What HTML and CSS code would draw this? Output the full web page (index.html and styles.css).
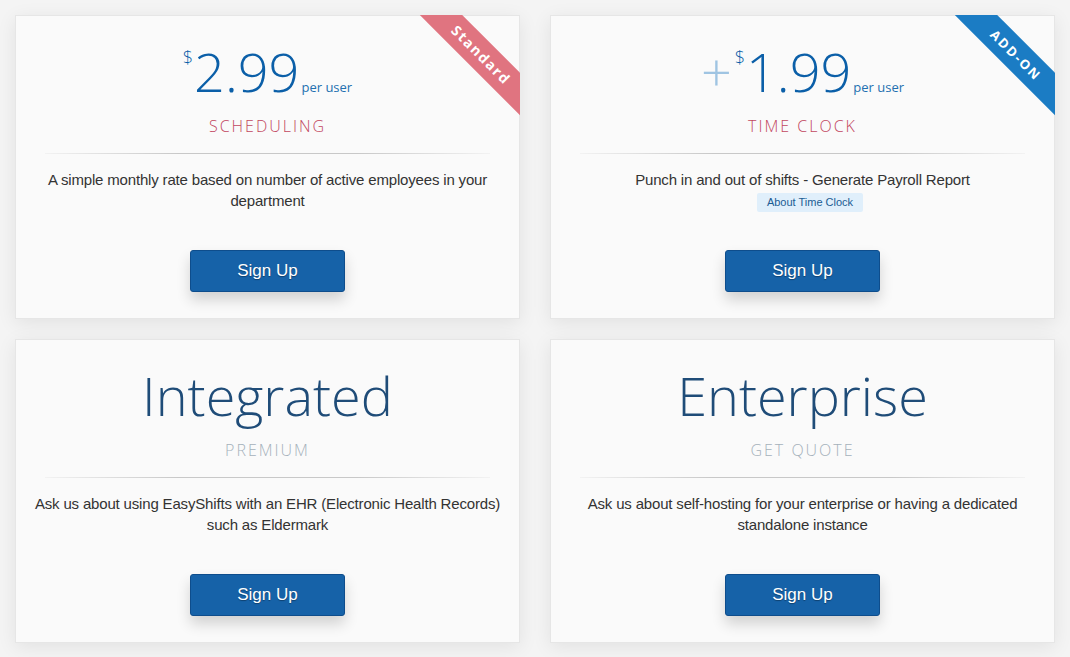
FILE: index.html
```html
<!DOCTYPE html>
<html lang="en">
<head>
<meta charset="utf-8">
<title>Pricing</title>
<link rel="stylesheet" href="styles.css">
</head>
<body>
<main class="pricing">
  <section class="card">
    <div class="ribbon-wrap"><div class="ribbon ribbon-standard">Standard</div></div>
    <div class="price"><span class="cur">$</span>2.99<span class="unit">per user</span></div>
    <div class="plan plan-red">SCHEDULING</div>
    <hr class="divider">
    <div class="desc">A simple monthly rate based on number of active employees in your department</div>
    <a class="btn" href="#">Sign Up</a>
  </section>
  <section class="card">
    <div class="ribbon-wrap"><div class="ribbon ribbon-addon">ADD-ON</div></div>
    <div class="price"><span class="plus">+</span><span class="cur">$</span>1.99<span class="unit">per user</span></div>
    <div class="plan plan-red">TIME CLOCK</div>
    <hr class="divider">
    <div class="desc">Punch in and out of shifts - Generate Payroll Report
      <div class="badge-row"><span class="badge">About Time Clock</span></div>
    </div>
    <a class="btn" href="#">Sign Up</a>
  </section>
  <section class="card">
    <div class="price name">Integrated</div>
    <div class="plan plan-gray">PREMIUM</div>
    <hr class="divider">
    <div class="desc">Ask us about using EasyShifts with an EHR (Electronic Health Records) such as Eldermark</div>
    <a class="btn" href="#">Sign Up</a>
  </section>
  <section class="card">
    <div class="price name">Enterprise</div>
    <div class="plan plan-gray">GET QUOTE</div>
    <hr class="divider">
    <div class="desc">Ask us about self-hosting for your enterprise or having a dedicated standalone instance</div>
    <a class="btn" href="#">Sign Up</a>
  </section>
</main>
</body>
</html>
```
FILE: styles.css
```css
* { box-sizing: border-box; }
html, body { margin: 0; padding: 0; }
body {
  background: #f4f4f4;
  font-family: "Liberation Sans", Arial, sans-serif;
  color: #333;
  width: 1070px;
  height: 657px;
  overflow: hidden;
}
.pricing {
  display: grid;
  grid-template-columns: 505px 505px;
  column-gap: 30px;
  row-gap: 20px;
  padding: 15px;
}
.card {
  position: relative;
  background: #fafafa;
  border: 1px solid #e6e6e6;
  box-shadow: 0 4px 18px rgba(0, 0, 0, 0.08);
  padding: 28px 15px 26px;
  text-align: center;
  height: 304px;
}
.ribbon-wrap {
  position: absolute;
  top: -1px;
  right: -1px;
  width: 104px;
  height: 104px;
  overflow: hidden;
}
.ribbon {
  position: absolute;
  left: -20.5px;
  top: 25px;
  width: 170px;
  height: 30px;
  line-height: 30px;
  transform: rotate(45deg);
  color: #fff;
  font-family: "Open Sans", sans-serif;
  font-weight: 700;
  text-align: center;
}
.ribbon-standard {
  background: #e07480;
  font-size: 14px;
  letter-spacing: 1.6px;
}
.ribbon-addon {
  background: #1b7cc4;
  font-size: 13px;
  letter-spacing: 2px;
}
.price {
  font-family: "Open Sans", sans-serif;
  font-weight: 300;
  font-size: 54px;
  line-height: 54px;
  height: 54px;
  color: #0b5fa8;
  white-space: nowrap;
}
.price .cur {
  font-size: 18px;
  line-height: 18px;
  vertical-align: 28px;
  margin-right: 1px;
}
.price .unit {
  font-size: 13px;
  font-weight: 400;
  color: #2270b0;
  margin-left: 2px;
}
.price .plus {
  color: #9fc4e2;
  margin-right: 3px;
}
.price.name {
  font-size: 54px;
  color: #1f4c78;
}
.plan {
  font-family: "Open Sans", sans-serif;
  font-weight: 300;
  font-size: 16px;
  line-height: 24px;
  letter-spacing: 2px;
  margin-top: 16px;
}
.plan-red { color: #c2475f; }
.plan-gray { color: #a5b1ba; }
.divider {
  border: 0;
  height: 1px;
  margin: 15px 14px 15px;
  background: linear-gradient(90deg, rgba(0,0,0,0.03), rgba(0,0,0,0.2) 30%, rgba(0,0,0,0.2) 70%, rgba(0,0,0,0.03));
}
.desc {
  font-size: 15px;
  line-height: 21px;
  letter-spacing: -0.17px;
  min-height: 43px;
  color: #333;
}
.badge-row {
  margin-top: 3px;
  line-height: 0;
}
.badge {
  display: inline-block;
  background: #e0effb;
  color: #1b5c93;
  font-size: 11px;
  line-height: 13px;
  letter-spacing: 0;
  padding: 3px 10px;
  margin-left: 15px;
  border-radius: 2px;
}
.btn {
  display: block;
  width: 155px;
  height: 42px;
  margin: 38px auto 0;
  background: #1662a8;
  border: 1px solid #0e4d8c;
  border-radius: 3px;
  color: #fff;
  font-size: 17px;
  line-height: 40px;
  text-decoration: none;
  text-shadow: 0 1px 1px rgba(0, 0, 0, 0.35);
  box-shadow: 0 8px 14px rgba(0, 0, 0, 0.16);
}
```
